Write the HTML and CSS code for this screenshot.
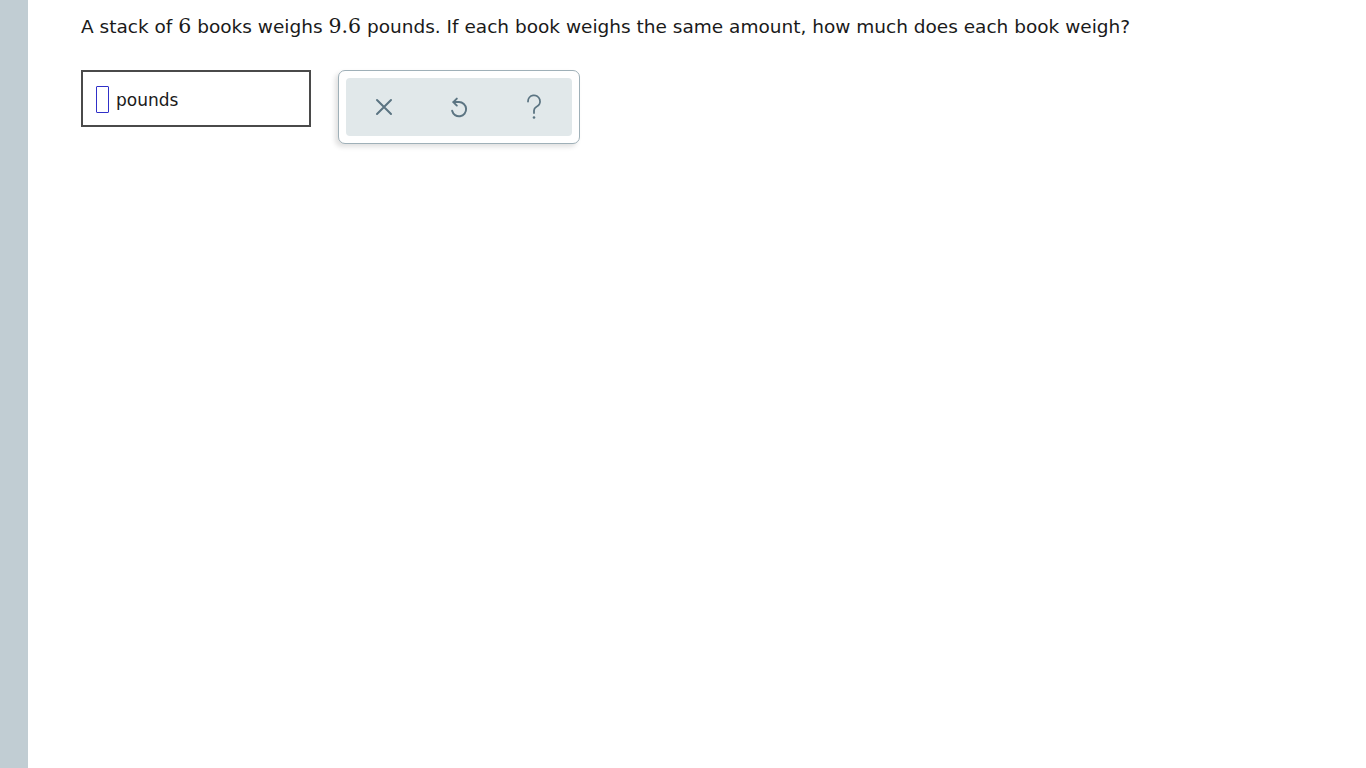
FILE: index.html
```html
<!DOCTYPE html>
<html>
<head>
<meta charset="utf-8">
<link rel="stylesheet" href="styles.css">
</head>
<body>
<div class="page">
  <aside class="sidebar"></aside>
  <main class="content">
    <p class="question">A stack of <span class="num">6</span> books weighs <span class="num">9.6</span> pounds. If each book weighs the same amount, how much does each book weigh?</p>
    <div class="answer-row">
      <div class="answer-box">
        <span class="cursor-box"></span>
        <span class="unit">pounds</span>
      </div>
      <div class="toolbar">
        <div class="toolbar-inner">
          <button class="tool" aria-label="clear">
            <svg width="20" height="20" viewBox="0 0 20 20"><path d="M3 3 L17 17 M17 3 L3 17" stroke="#5b7482" stroke-width="2" fill="none" stroke-linecap="round"/></svg>
          </button>
          <button class="tool" aria-label="undo">
            <svg width="22" height="24" viewBox="0 0 20 22"><path d="M5 6.5 L10 6.5 A6.5 6.5 0 1 1 3.7 14.5" stroke="#5b7482" stroke-width="1.8" fill="none" stroke-linecap="round"/><path d="M8 3.3 L4.8 6.5 L8 9.7" stroke="#5b7482" stroke-width="1.8" fill="none" stroke-linecap="round" stroke-linejoin="round"/></svg>
          </button>
          <button class="tool" aria-label="help">
            <svg width="20" height="26" viewBox="0 0 20 26"><path d="M4 7.5 A6 6 0 1 1 12.5 12.8 C10.8 13.8 10 14.8 10 16.5 L10 19" stroke="#5b7482" stroke-width="1.8" fill="none" stroke-linecap="round"/><circle cx="10" cy="23.5" r="1.3" fill="#5b7482"/></svg>
          </button>
        </div>
      </div>
    </div>
  </main>
</div>
</body>
</html>
```
FILE: styles.css
```css
html, body {
  margin: 0;
  padding: 0;
  background: #ffffff;
}
.page {
  display: flex;
  min-height: 768px;
}
.sidebar {
  width: 28px;
  flex: none;
  background: #c1cdd3;
}
.content {
  flex: 1;
  padding: 14px 0 0 53px;
  font-family: "DejaVu Sans", Verdana, sans-serif;
  color: #1a1a1a;
}
.question {
  margin: 0;
  font-size: 18.5px;
  line-height: 26px;
}
.num {
  font-family: "DejaVu Serif", "Liberation Serif", serif;
  font-size: 20.5px;
  line-height: 20px;
}
.answer-row {
  display: flex;
  align-items: flex-start;
  gap: 27px;
  margin-top: 30px;
}
.answer-box {
  width: 213px;
  height: 53px;
  border: 2px solid #4a4a4a;
  display: flex;
  align-items: center;
  padding-left: 13px;
  box-sizing: content-box;
}
.cursor-box {
  width: 11px;
  height: 25px;
  border: 1.5px solid #3030c8;
  border-radius: 1px;
  margin-right: 7px;
  margin-top: 1px;
}
.unit {
  font-size: 17px;
  color: #1a1a1a;
  padding-top: 2px;
}
.toolbar {
  width: 226px;
  height: 58px;
  padding: 7px;
  border: 1px solid #9fb0b8;
  border-radius: 7px;
  background: #ffffff;
  box-shadow: -3px 3px 5px rgba(0,0,0,0.12);
}
.toolbar-inner {
  height: 100%;
  background: #e1e8ea;
  border-radius: 4px;
  display: flex;
  align-items: center;
  justify-content: center;
  gap: 35px;
}
.tool {
  background: none;
  border: none;
  padding: 0;
  width: 40px;
  height: 40px;
  display: flex;
  align-items: center;
  justify-content: center;
}
```
